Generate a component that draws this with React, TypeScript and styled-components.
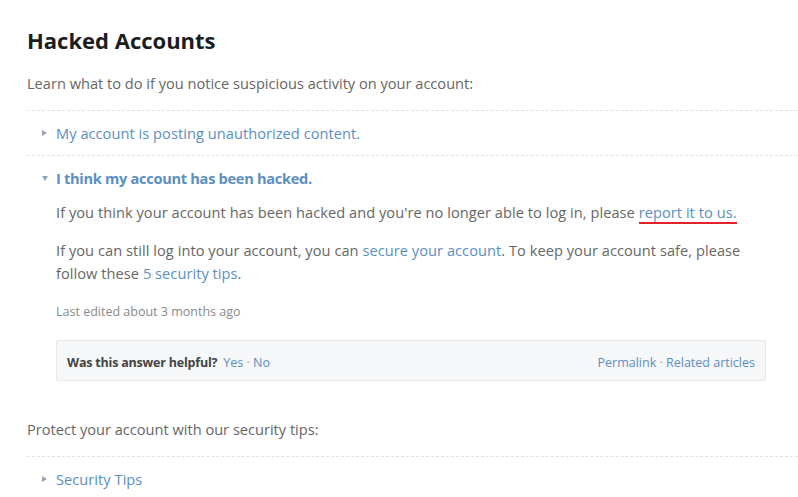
import React from 'react'
import styled, { createGlobalStyle } from 'styled-components'

const GlobalStyle = createGlobalStyle`
  html, body {
    margin: 0;
    padding: 0;
    background: #ffffff;
  }
  body {
    font-family: 'Open Sans', 'Liberation Sans', sans-serif;
    -webkit-font-smoothing: antialiased;
  }
`

type Faq = { q: string; open?: boolean }

const hackedItems: Faq[] = [
  { q: 'My account is posting unauthorized content.' },
  { q: 'I think my account has been hacked.', open: true },
]

const App = () => (
  <>
    <GlobalStyle />
    <Page>
      <Title>Hacked Accounts</Title>
      <Intro>Learn what to do if you notice suspicious activity on your account:</Intro>
      <List>
        {hackedItems.map(item => (
          <Item key={item.q}>
            <Summary>
              <Caret open={item.open} />
              <Question open={item.open}>{item.q}</Question>
            </Summary>
            {item.open && <Answer />}
          </Item>
        ))}
      </List>

      <Intro $spaced>Protect your account with our security tips:</Intro>
      <List>
        <Item>
          <Summary>
            <Caret />
            <Question>Security Tips</Question>
          </Summary>
        </Item>
      </List>
    </Page>
  </>
)

const Answer = () => (
  <Body>
    <Para>
      If you think your account has been hacked and you're no longer able to log in, please{' '}
      <Marked>report it to us.</Marked>
    </Para>
    <Para>
      If you can still log into your account, you can <Link>secure your account</Link>. To keep your
      account safe, please follow these <Link>5 security tips</Link>.
    </Para>
    <Edited>Last edited about 3 months ago</Edited>
    <Feedback>
      <span>
        <Ask>Was this answer helpful?</Ask>
        <Link>Yes</Link>
        <Dot> · </Dot>
        <Link>No</Link>
      </span>
      <span>
        <Link>Permalink</Link>
        <Dot> · </Dot>
        <Link>Related articles</Link>
      </span>
    </Feedback>
  </Body>
)

export default App

// Styles
const Page = styled.div`
  padding: 26px 0 0 27px;
`

const Title = styled.h1`
  margin: 0 0 18px 0;
  font-size: 22px;
  line-height: 28px;
  font-weight: 700;
  color: #1b1d1f;
`

const Intro = styled.p<{ $spaced?: boolean }>`
  margin: ${p => (p.$spaced ? '37px' : '0')} 0 16px 0;
  font-size: 14.6px;
  line-height: 22px;
  color: #666666;
`

const List = styled.div`
  display: flex;
  flex-direction: column;
`

const Item = styled.div`
  border-top: 1px dashed #e2e2e2;
`

const Summary = styled.div`
  display: flex;
  align-items: center;
  height: 44px;
  padding-left: 14px;
`

const Caret = styled.span<{ open?: boolean }>`
  width: 0;
  height: 0;
  margin-left: 1px;
  ${p =>
    p.open
      ? `border-left: 3.5px solid transparent;
         border-right: 3.5px solid transparent;
         border-top: 5px solid #8fa3b8;
         margin-right: 8px;`
      : `border-top: 3.5px solid transparent;
         border-bottom: 3.5px solid transparent;
         border-left: 5px solid #9aa5b1;
         margin-right: 9px;`}
`

const Question = styled.span<{ open?: boolean }>`
  font-size: 14.6px;
  color: #5b8ec2;
  font-weight: ${p => (p.open ? 700 : 400)};
  letter-spacing: ${p => (p.open ? '-0.3px' : '0.05px')};
`

const Body = styled.div`
  padding: 1px 32px 0 29px;
`

const Para = styled.p`
  margin: 0 0 15px 0;
  font-size: 14.6px;
  line-height: 23px;
  letter-spacing: 0.05px;
  color: #666666;
`

const Link = styled.span`
  color: #5b8ec2;
`

const Marked = styled(Link)`
  border-bottom: 2px solid #e3212b;
`

const Edited = styled.div`
  margin: 17px 0 18px 0;
  font-size: 12.5px;
  line-height: 20px;
  color: #8a8a8a;
`

const Feedback = styled.div`
  display: flex;
  justify-content: space-between;
  align-items: center;
  box-sizing: content-box;
  height: 35px;
  padding: 4px 10px 0 10px;
  background: #f6f7f9;
  border: 1px solid #e4e7eb;
  border-radius: 2px;
  font-size: 12.5px;
`

const Ask = styled.span`
  font-weight: 700;
  color: #444444;
  margin-right: 6px;
  letter-spacing: -0.2px;
`

const Dot = styled.span`
  color: #8fa3b8;
`
